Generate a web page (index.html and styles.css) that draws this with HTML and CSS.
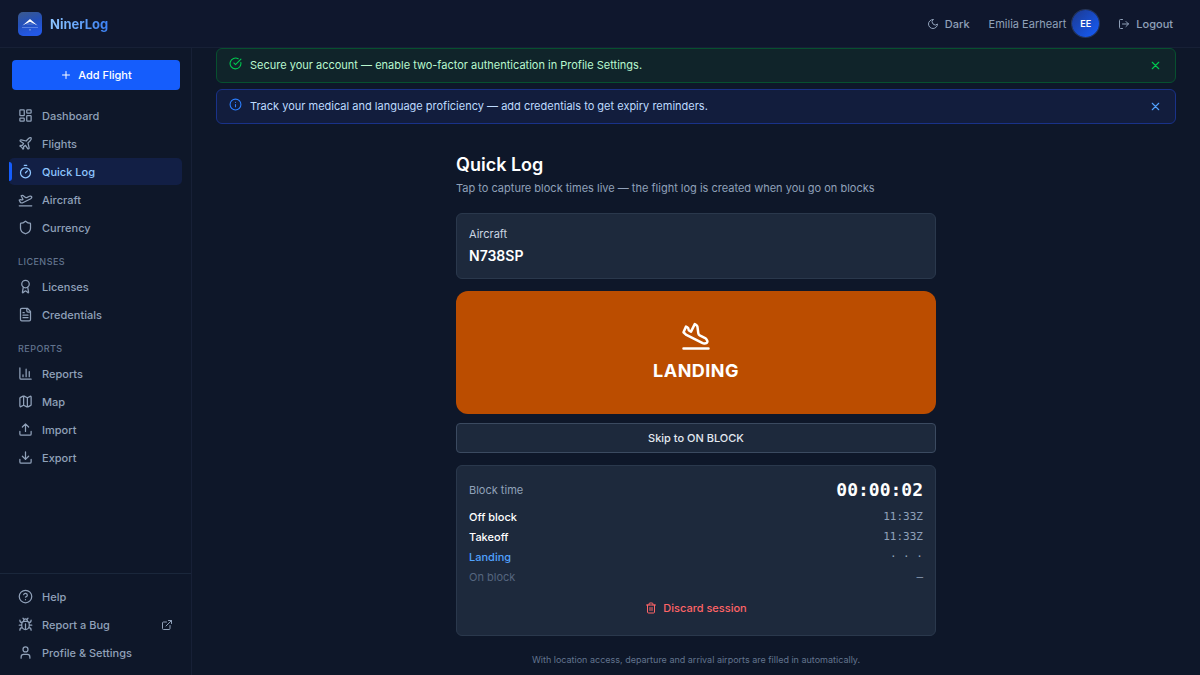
FILE: index.html
```html
<!DOCTYPE html>
<html lang="en">
  <head>
    <meta charset="UTF-8" />
    <meta name="viewport" content="width=device-width, initial-scale=1.0" />
    <title>NinerLog - Quick Log</title>
    <link rel="stylesheet" href="styles.css">
  </head>
  <body>
    <!-- Icon sprite -->
    <svg class="sprite" aria-hidden="true">
      <symbol id="i-plus" viewBox="0 0 24 24"><path d="M5 12h14M12 5v14" /></symbol>
      <symbol id="i-x" viewBox="0 0 24 24"><path d="M18 6 6 18M6 6l12 12" /></symbol>
      <symbol id="i-moon" viewBox="0 0 24 24"><path d="M12 3a6 6 0 0 0 9 9 9 9 0 1 1-9-9Z" /></symbol>
      <symbol id="i-logout" viewBox="0 0 24 24"><path d="m16 17 5-5-5-5M21 12H9M9 21H5a2 2 0 0 1-2-2V5a2 2 0 0 1 2-2h4" /></symbol>
      <symbol id="i-dashboard" viewBox="0 0 24 24">
        <rect x="3" y="3" width="7" height="9" rx="1" />
        <rect x="14" y="3" width="7" height="5" rx="1" />
        <rect x="14" y="12" width="7" height="9" rx="1" />
        <rect x="3" y="16" width="7" height="5" rx="1" />
      </symbol>
      <symbol id="i-plane" viewBox="0 0 24 24"><path d="M17.8 19.2 16 11l3.500-3.500C21 6 21.500 4 21 3c-1-.5-3 0-4.500 1.500L13 8 4.800 6.200c-.5-.1-.9.1-1.100.5l-.3.5c-.2.5-.1 1 .3 1.300L9 12l-2 3H4l-1 1 3 2 2 3 1-1v-3l3-2 3.500 5.300c.3.400.8.5 1.300.3l.5-.2c.4-.3.6-.7.5-1.200z" /></symbol>
      <symbol id="i-timer" viewBox="0 0 24 24"><path d="M10 2h4M12 14l3-3" /><circle cx="12" cy="14" r="8" /></symbol>
      <symbol id="i-takeoff" viewBox="0 0 24 24"><path d="M2 22h20M6.360 17.400 4 17l-2-4 1.100-.55a2 2 0 0 1 1.800 0l.17.1a2 2 0 0 0 1.800 0L8 12 5 6l.9-.45a2 2 0 0 1 2.090.2l4.020 3a2 2 0 0 0 2.100.2l4.190-2.060a2.410 2.410 0 0 1 1.730-.17L21 7a1.400 1.400 0 0 1 .87 1.990l-.38.76c-.23.46-.6.84-1.070 1.080L7.580 17.200a2 2 0 0 1-1.220.18Z" /></symbol>
      <symbol id="i-landing" viewBox="0 0 24 24"><path d="M2 22h20M3.770 10.770 2 9l2-4.500 1.100.55c.55.28.9.84.9 1.450s.35 1.170.9 1.450L8 8.500l3-6 1.050.53a2 2 0 0 1 1.090 1.520l.72 5.400a2 2 0 0 0 1.090 1.520l4.400 2.200c.42.22.78.55 1.010.96l.6 1.030c.49.88-.06 1.980-1.060 2.100l-1.180.15c-.47.06-.95-.02-1.370-.24L4.290 11.150a2 2 0 0 1-.52-.38Z" /></symbol>
      <symbol id="i-shield" viewBox="0 0 24 24"><path d="M20 13c0 5-3.500 7.500-7.660 8.950a1 1 0 0 1-.67-.01C7.500 20.500 4 18 4 13V6a1 1 0 0 1 1-1c2 0 4.500-1.200 6.240-2.720a1.170 1.170 0 0 1 1.520 0C14.510 3.810 17 5 19 5a1 1 0 0 1 1 1z" /></symbol>
      <symbol id="i-award" viewBox="0 0 24 24"><path d="m15.477 12.890 1.515 8.526a.5.5 0 0 1-.81.470l-3.580-2.687a1 1 0 0 0-1.197 0l-3.586 2.686a.5.5 0 0 1-.81-.469l1.514-8.526" /><circle cx="12" cy="8" r="6" /></symbol>
      <symbol id="i-file" viewBox="0 0 24 24"><path d="M15 2H6a2 2 0 0 0-2 2v16a2 2 0 0 0 2 2h12a2 2 0 0 0 2-2V7ZM14 2v4a2 2 0 0 0 2 2h4M10 9H8M16 13H8M16 17H8" /></symbol>
      <symbol id="i-chart" viewBox="0 0 24 24"><path d="M3 3v16a2 2 0 0 0 2 2h16M18 17V9M13 17V5M8 17v-3" /></symbol>
      <symbol id="i-map" viewBox="0 0 24 24"><path d="M14.106 5.553a2 2 0 0 0 1.788 0l3.659-1.830A1 1 0 0 1 21 4.619v12.764a1 1 0 0 1-.553.894l-4.553 2.277a2 2 0 0 1-1.788 0l-4.212-2.106a2 2 0 0 0-1.788 0l-3.659 1.830A1 1 0 0 1 3 19.381V6.618a1 1 0 0 1 .553-.894l4.553-2.277a2 2 0 0 1 1.788 0zM15 5.764v15M9 3.236v15" /></symbol>
      <symbol id="i-upload" viewBox="0 0 24 24"><path d="M12 3v12M17 8l-5-5-5 5M21 15v4a2 2 0 0 1-2 2H5a2 2 0 0 1-2-2v-4" /></symbol>
      <symbol id="i-download" viewBox="0 0 24 24"><path d="M12 15V3M21 15v4a2 2 0 0 1-2 2H5a2 2 0 0 1-2-2v-4M7 10l5 5 5-5" /></symbol>
      <symbol id="i-help" viewBox="0 0 24 24"><circle cx="12" cy="12" r="10" /><path d="M9.090 9a3 3 0 0 1 5.830 1c0 2-3 3-3 3M12 17h.01" /></symbol>
      <symbol id="i-bug" viewBox="0 0 24 24"><path d="m8 2 1.880 1.880M14.120 3.880 16 2M9 7.130v-1a3.003 3.003 0 1 1 6 0v1M12 20c-3.300 0-6-2.700-6-6v-3a4 4 0 0 1 4-4h4a4 4 0 0 1 4 4v3c0 3.300-2.700 6-6 6M12 20v-9M6.530 9C4.600 8.800 3 7.100 3 5M6 13H2M3 21c0-2.100 1.700-3.900 3.800-4M20.970 5c0 2.100-1.600 3.800-3.500 4M22 13h-4M17.200 17c2.100.1 3.800 1.900 3.800 4" /></symbol>
      <symbol id="i-external" viewBox="0 0 24 24"><path d="M15 3h6v6M10 14 21 3M18 13v6a2 2 0 0 1-2 2H5a2 2 0 0 1-2-2V8a2 2 0 0 1 2-2h6" /></symbol>
      <symbol id="i-user" viewBox="0 0 24 24"><path d="M19 21v-2a4 4 0 0 0-4-4H9a4 4 0 0 0-4 4v2" /><circle cx="12" cy="7" r="4" /></symbol>
      <symbol id="i-check" viewBox="0 0 24 24"><path d="M21.801 10A10 10 0 1 1 17 3.335M9 11l3 3L22 4" /></symbol>
      <symbol id="i-info" viewBox="0 0 24 24"><circle cx="12" cy="12" r="10" /><path d="M12 16v-4M12 8h.01" /></symbol>
      <symbol id="i-trash" viewBox="0 0 24 24"><path d="M3 6h18M19 6v14a2 2 0 0 1-2 2H7a2 2 0 0 1-2-2V6M8 6V4a2 2 0 0 1 2-2h4a2 2 0 0 1 2 2v2M10 11v6M14 11v6" /></symbol>
    </svg>

    <header class="topbar">
      <a class="brand" href="#">
        <svg class="brand-logo" viewBox="0 0 24 24" aria-hidden="true">
          <defs>
            <linearGradient id="logo-bg" x1="0" y1="0" x2="0.3" y2="1">
              <stop offset="0" stop-color="#3c5a8c" />
              <stop offset="0.5" stop-color="#2450b8" />
              <stop offset="1" stop-color="#2358e6" />
            </linearGradient>
          </defs>
          <rect width="24" height="24" rx="5" fill="url(#logo-bg)" />
          <path d="M4.500 13.500 12 7l7.500 6.500L12 9.800Z" fill="#fff" />
          <path d="M8.500 12h7" stroke="#fff" stroke-opacity="0.3" stroke-width="1" />
          <path d="M4 15.500h16" stroke="#a9c4fb" stroke-opacity="0.6" stroke-width="0.7" />
          <circle cx="12" cy="17.800" r="0.6" fill="#dbe7ff" />
        </svg>
        <span class="brand-name">NinerLog</span>
      </a>
      <div class="topbar-actions">
        <button class="text-button" type="button">
          <svg class="icon icon-sm"><use href="#i-moon" /></svg>
          Dark
        </button>
        <a class="account" href="#">
          <span>Emilia Earheart</span>
          <span class="avatar">EE</span>
        </a>
        <button class="text-button" type="button">
          <svg class="icon icon-sm"><use href="#i-logout" /></svg>
          Logout
        </button>
      </div>
    </header>

    <div class="layout">
      <aside class="sidebar">
        <button class="add-button" type="button">
          <svg class="icon icon-sm"><use href="#i-plus" /></svg>
          Add Flight
        </button>

        <nav class="nav" aria-label="Main">
          <div class="nav-group">
            <a class="nav-link" href="#"><svg class="icon"><use href="#i-dashboard" /></svg>Dashboard</a>
            <a class="nav-link" href="#"><svg class="icon"><use href="#i-plane" /></svg>Flights</a>
            <a class="nav-link active" href="#" aria-current="page"><svg class="icon"><use href="#i-timer" /></svg>Quick Log</a>
            <a class="nav-link" href="#"><svg class="icon"><use href="#i-takeoff" /></svg>Aircraft</a>
            <a class="nav-link" href="#"><svg class="icon"><use href="#i-shield" /></svg>Currency</a>
          </div>
          <div class="nav-group">
            <h2 class="nav-heading">Licenses</h2>
            <a class="nav-link" href="#"><svg class="icon"><use href="#i-award" /></svg>Licenses</a>
            <a class="nav-link" href="#"><svg class="icon"><use href="#i-file" /></svg>Credentials</a>
          </div>
          <div class="nav-group">
            <h2 class="nav-heading">Reports</h2>
            <a class="nav-link" href="#"><svg class="icon"><use href="#i-chart" /></svg>Reports</a>
            <a class="nav-link" href="#"><svg class="icon"><use href="#i-map" /></svg>Map</a>
            <a class="nav-link" href="#"><svg class="icon"><use href="#i-upload" /></svg>Import</a>
            <a class="nav-link" href="#"><svg class="icon"><use href="#i-download" /></svg>Export</a>
          </div>
        </nav>

        <div class="sidebar-footer nav-group">
          <a class="nav-link" href="#"><svg class="icon"><use href="#i-help" /></svg>Help</a>
          <a class="nav-link" href="#">
            <svg class="icon"><use href="#i-bug" /></svg>Report a Bug
            <svg class="icon icon-sm nav-external"><use href="#i-external" /></svg>
          </a>
          <a class="nav-link" href="#"><svg class="icon"><use href="#i-user" /></svg>Profile &amp; Settings</a>
        </div>
      </aside>

      <main class="content">
        <div class="banners">
          <div class="banner banner-success" role="status">
            <svg class="icon icon-md"><use href="#i-check" /></svg>
            <p>Secure your account — enable two-factor authentication in Profile Settings.</p>
            <button class="banner-close" type="button" aria-label="Dismiss">
              <svg class="icon icon-md"><use href="#i-x" /></svg>
            </button>
          </div>
          <div class="banner banner-info" role="status">
            <svg class="icon icon-md"><use href="#i-info" /></svg>
            <p>Track your medical and language proficiency — add credentials to get expiry reminders.</p>
            <button class="banner-close" type="button" aria-label="Dismiss">
              <svg class="icon icon-md"><use href="#i-x" /></svg>
            </button>
          </div>
        </div>

        <div class="quick-log">
          <h1 class="page-title">Quick Log</h1>
          <p class="page-subtitle">Tap to capture block times live — the flight log is created when you go on blocks</p>

          <section class="card">
            <p class="aircraft-label">Aircraft</p>
            <p class="aircraft-reg">N738SP</p>
          </section>

          <button class="landing-button" type="button">
            <svg class="icon icon-lg"><use href="#i-landing" /></svg>
            LANDING
          </button>
          <button class="skip-button" type="button">Skip to ON BLOCK</button>

          <section class="card session">
            <div class="session-header">
              <span>Block time</span>
              <span class="session-clock">00:00:02</span>
            </div>
            <dl class="events">
              <div class="event"><dt>Off block</dt><dd>11:33Z</dd></div>
              <div class="event"><dt>Takeoff</dt><dd>11:33Z</dd></div>
              <div class="event current"><dt>Landing</dt><dd>· · ·</dd></div>
              <div class="event pending"><dt>On block</dt><dd>—</dd></div>
            </dl>
            <button class="discard-button" type="button">
              <svg class="icon icon-sm"><use href="#i-trash" /></svg>
              Discard session
            </button>
          </section>

          <p class="hint">With location access, departure and arrival airports are filled in automatically.</p>
        </div>
      </main>
    </div>
  </body>
</html>
```
FILE: styles.css
```css
* {
  margin: 0;
  padding: 0;
  box-sizing: border-box;
}

body {
  display: flex;
  flex-direction: column;
  min-height: 100vh;
  font-family: Inter, "Liberation Sans", sans-serif;
  font-size: 11px;
  line-height: 16px;
  color: #90a1b9;
  background: #0e1729;
}

a {
  color: inherit;
  text-decoration: none;
}

button {
  font: inherit;
  color: inherit;
  background: none;
  border: none;
  cursor: pointer;
}

.sprite {
  display: none;
}

.icon {
  flex: none;
  width: 15px;
  height: 15px;
  fill: none;
  stroke: currentColor;
  stroke-width: 2;
  stroke-linecap: round;
  stroke-linejoin: round;
}

.icon-sm {
  width: 12px;
  height: 12px;
}

.icon-md {
  width: 13px;
  height: 13px;
}

.icon-lg {
  width: 30px;
  height: 30px;
}

/* Top bar */
.topbar {
  display: flex;
  align-items: center;
  justify-content: space-between;
  height: 48px;
  padding: 0 18px;
  background: #0f172d;
  border-bottom: 1px solid #172036;
}

.brand {
  display: flex;
  align-items: center;
  gap: 8px;
}

.brand-logo {
  width: 24px;
  height: 24px;
}

.brand-name {
  font-size: 13px;
  font-weight: 700;
  line-height: 20px;
  color: transparent;
  background: linear-gradient(90deg, #8ec5ff, #3b82f6);
  -webkit-background-clip: text;
  background-clip: text;
}

.topbar-actions {
  display: flex;
  align-items: center;
  gap: 10px;
}

.text-button {
  display: flex;
  align-items: center;
  gap: 6px;
  padding: 6px 9px;
  font-weight: 500;
}

.account {
  display: flex;
  align-items: center;
  gap: 6px;
}

.avatar {
  display: grid;
  place-items: center;
  width: 27px;
  height: 27px;
  font-size: 9px;
  font-weight: 600;
  color: #fff;
  background: linear-gradient(135deg, #1c398e, #155dfc);
  border-radius: 50%;
  box-shadow: 0 0 0 1px #26365a;
}

/* Sidebar */
.layout {
  display: flex;
  flex: 1;
}

.sidebar {
  display: flex;
  flex: none;
  flex-direction: column;
  width: 192px;
  border-right: 1px solid #172036;
}

.add-button {
  display: flex;
  align-items: center;
  justify-content: center;
  gap: 6px;
  margin: 12px 11px 12px 12px;
  padding: 7px;
  font-weight: 500;
  color: #fff;
  background: #155dfc;
  border-radius: 4px;
}

.nav {
  display: flex;
  flex: 1;
  flex-direction: column;
  gap: 12px;
  padding: 0 9px;
}

.nav-group {
  display: flex;
  flex-direction: column;
  gap: 1px;
}

.nav-heading {
  padding: 2px 9px 3px;
  font-size: 9px;
  font-weight: 500;
  line-height: 14px;
  letter-spacing: 0.05em;
  text-transform: uppercase;
  color: #62748e;
}

.nav-link {
  position: relative;
  display: flex;
  align-items: center;
  gap: 9px;
  height: 27px;
  padding: 0 9px;
  font-weight: 500;
  border-radius: 5px;
}

.nav-link.active {
  color: #8ec5ff;
  background: #121f45;
}

.nav-link.active::before {
  content: "";
  position: absolute;
  top: 4px;
  bottom: 4px;
  left: 0;
  width: 3px;
  background: #155dfc;
  border-radius: 0 3px 3px 0;
}

.nav-external {
  margin-left: auto;
}

.sidebar-footer {
  padding: 9px;
  border-top: 1px solid #1a273b;
}

/* Content */
.content {
  flex: 1;
  min-width: 0;
  padding: 0 24px;
}

.banners {
  display: flex;
  flex-direction: column;
  gap: 6px;
}

.banner {
  display: flex;
  align-items: flex-start;
  gap: 8px;
  padding: 8px 12px;
  line-height: 17px;
  border: 1px solid;
  border-radius: 6px;
}

.banner p {
  flex: 1;
}

.banner-close {
  display: flex;
  padding: 2px 1px;
}

.banner-success {
  color: #00c950;
  background: #10242a;
  border-color: #07502f;
}

.banner-success p {
  color: #b9f8cf;
}

.banner-info {
  color: #2b7fff;
  background: #121d3d;
  border-color: #193289;
}

.banner-info p {
  color: #bedbff;
}

.banner-info .banner-close {
  color: #51a2ff;
}

.quick-log {
  display: flex;
  flex-direction: column;
  max-width: 480px;
  margin: 29px auto 0;
}

.page-title {
  font-size: 18px;
  font-weight: 600;
  line-height: 24px;
  color: #fff;
}

.page-subtitle {
  margin: 3px 0 17px;
}

.card {
  padding: 12px;
  background: #1d293c;
  border: 1px solid #2a384c;
  border-radius: 6px;
}

.aircraft-label {
  color: #cad5e2;
}

.aircraft-reg {
  margin-top: 4px;
  font-size: 14px;
  font-weight: 600;
  line-height: 20px;
  color: #fff;
}

.landing-button {
  display: flex;
  flex-direction: column;
  align-items: center;
  gap: 6px;
  margin: 12px 0 9px;
  padding: 30px;
  font-size: 18px;
  font-weight: 700;
  line-height: 27px;
  letter-spacing: 0.025em;
  color: #fff;
  background: #bb4d00;
  border-radius: 12px;
}

.skip-button {
  padding: 6px;
  font-weight: 500;
  color: #e2e8f0;
  background: #1d293c;
  border: 1px solid #3b4a60;
  border-radius: 4px;
}

.session {
  display: flex;
  flex-direction: column;
  margin-top: 12px;
}

.session-header {
  display: flex;
  align-items: center;
  justify-content: space-between;
}

.session-clock {
  font-family: "DejaVu Sans Mono", monospace;
  font-size: 18px;
  font-weight: 700;
  line-height: 24px;
  color: #fff;
}

.events {
  display: flex;
  flex-direction: column;
  gap: 4px;
  margin: 7px 0 8px;
}

.event {
  display: flex;
  justify-content: space-between;
}

.event dt {
  font-weight: 500;
  color: #fff;
}

.event dd {
  font-family: "DejaVu Sans Mono", monospace;
}

.event.current dt {
  color: #51a2ff;
}

.event.pending dt {
  font-weight: 400;
  color: #55657e;
}

.discard-button {
  display: flex;
  align-items: center;
  align-self: center;
  gap: 6px;
  padding: 7px 12px;
  font-weight: 500;
  color: #ff6467;
}

.hint {
  margin-top: 16px;
  font-size: 9px;
  text-align: center;
  color: #62748e;
}
```
